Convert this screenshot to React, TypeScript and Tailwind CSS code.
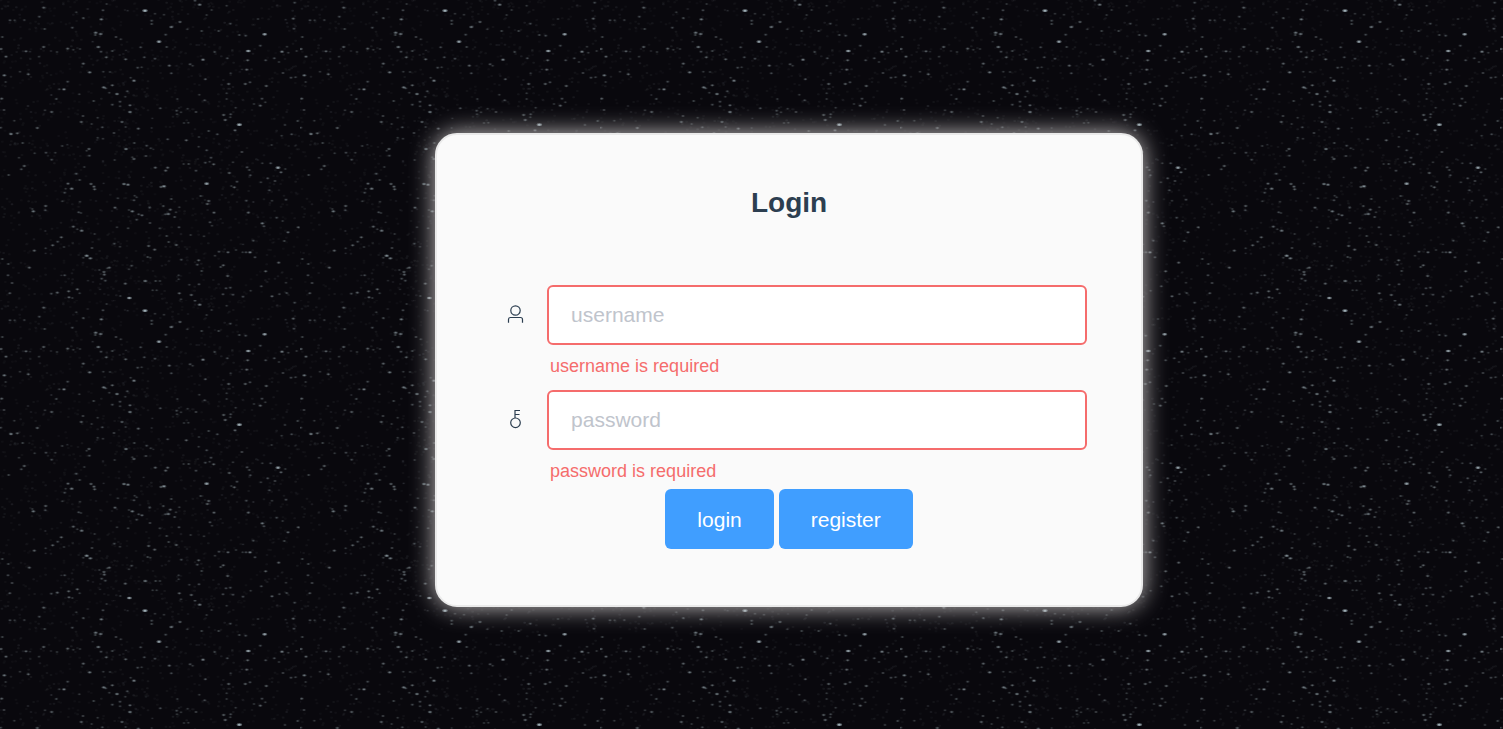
import { useState } from "react";

// Stars of one 300px sky tile, in thirds of a pixel: x, y, brightness (1-9)
const STARS: number[][] = [
  [131,23,5],[435,32,9],[585,2,4],[599,14,6],[680,17,3],[884,8,4],[320,12,3],[118,50,4],[229,37,3],[250,54,4],[309,31,4],[304,58,6],[30,61,4],[44,61,3],[73,60,3],[134,87,4],[217,83,4],[383,32,2],[465,41,3],[492,44,3],[455,62,4],[455,72,4],[540,66,5],[514,81,6],[562,88,3],[620,45,3],[635,30,3],[691,71,4],[656,93,4],[605,93,4],[774,57,3],[880,56,5],[857,59,2],[882,86,4],
  [287,98,6],[302,102,6],[286,105,4],[278,125,2],[348,111,4],[362,118,3],[295,141,6],[303,155,4],[337,153,4],[319,172,5],[7,111,4],[3,147,5],[18,170,5],[78,154,5],[90,155,2],[131,141,5],[117,170,3],[203,146,5],[220,149,3],[240,147,3],[171,156,3],[153,153,2],[250,191,5],[497,104,4],[477,125,8],[422,142,4],[500,141,4],[433,172,4],[465,176,4],[377,178,5],[378,151,2],[508,197,5],[514,220,4],[413,203,4],[425,202,3],[644,156,4],[609,179,6],[570,193,4],[578,197,3],[682,175,4],[718,105,4],[737,107,4],[794,103,8],[781,137,4],[745,153,8],[743,181,5],[797,181,4],[823,175,4],[846,155,6],[865,158,3],[890,153,3],[861,140,3],[740,209,5],[726,208,2],[837,186,3],
  [13,226,6],[17,246,3],[60,215,3],[85,223,5],[203,245,4],[269,217,6],[310,215,3],[330,216,3],[192,268,6],[178,268,3],[5,296,5],[402,242,6],[392,233,3],[337,256,5],[311,262,6],[317,265,4],[382,274,4],[328,278,3],[351,282,6],[376,290,3],[360,305,4],[337,314,4],[360,319,3],[390,316,5],[390,336,6],[281,303,4],[169,297,4],[154,285,2],[238,283,3],[155,336,5],[135,331,3],[12,330,4],[84,318,2],[616,238,4],[692,220,3],[849,219,4],[686,252,5],[736,252,5],[750,247,4],[799,258,5],[873,233,4],[886,232,3],[680,280,3],[598,284,3],[614,301,4],[680,297,3],[786,296,4],[796,307,3],[762,312,3],[781,317,5],[532,297,3],[481,325,4],[530,332,4],[543,337,3],[563,326,3],[588,336,4],[707,323,3],
  [43,362,3],[112,384,5],[52,400,5],[33,402,6],[2,383,4],[249,348,4],[244,366,5],[275,372,3],[293,353,3],[307,382,4],[366,366,5],[377,381,3],[415,386,5],[342,399,4],[293,413,3],[309,416,3],[457,355,2],[455,384,2],[531,343,3],[552,369,3],[565,368,3],[671,345,5],[692,343,4],[691,352,3],[676,360,5],[718,374,9],[705,391,5],[626,393,4],[652,403,4],[893,363,4],[875,403,4],[855,375,3],[845,407,3],[503,418,4],[559,421,5],[597,411,3],[596,440,3],[815,435,3],[68,429,4],[45,429,1],[88,429,1],[187,438,3],[202,434,2],[267,447,5],[260,452,3],[403,429,4],[378,447,6],[440,437,4],[452,445,3],[460,448,2],[620,451,4],[726,456,4],
  [104,460,3],[138,458,4],[166,458,3],[155,479,4],[57,473,3],[73,498,5],[64,508,4],[26,525,4],[268,467,4],[253,501,3],[229,521,4],[239,540,4],[402,477,5],[397,472,3],[344,480,3],[438,468,4],[466,503,5],[503,503,5],[497,512,5],[551,492,3],[566,492,4],[633,473,4],[616,488,4],[629,485,3],[641,493,5],[588,512,4],[688,519,5],[699,487,3],[741,502,4],[748,510,4],[751,526,4],[834,503,8],[843,517,5],[856,507,3],[812,490,4],[787,490,3],[803,535,4],[825,543,4],[783,547,3],[808,571,4],[816,602,3],[858,599,4],[711,545,4],[703,562,5],[694,558,3],[739,602,4],[760,606,2],
  [204,551,5],[215,566,6],[197,566,3],[194,578,4],[273,552,5],[282,560,5],[284,568,5],[372,552,6],[384,554,6],[311,550,2],[492,559,7],[483,561,5],[431,532,2],[620,551,8],[602,588,4],[626,603,5],[622,612,5],[642,638,5],[137,618,5],[136,631,4],[97,627,3],[100,634,6],[187,604,3],[240,605,3],[236,637,4],[243,639,3],[345,623,5],[354,595,3],[404,587,3],[402,601,4],[410,592,3],[397,634,6],[387,630,3],[449,623,4],[426,646,5],[416,643,4],[410,659,4],[490,618,4],[514,597,4],[511,629,5],[505,642,6],[496,643,4],[538,622,3],[528,637,3],[524,651,4],[745,638,5],[630,667,4],[636,677,3],[787,670,6],[792,679,4],[830,653,4],[848,663,3],[895,682,5],[864,697,5],[853,723,4],
  [136,693,2],[220,680,5],[232,688,3],[245,692,6],[257,667,2],[284,702,3],[351,682,3],[384,685,3],[184,712,5],[173,725,4],[158,736,5],[137,745,3],[103,752,5],[137,760,2],[192,741,3],[276,744,4],[260,767,7],[271,775,6],[250,773,3],[343,731,4],[360,740,3],[446,738,5],[464,749,5],[443,771,4],[451,773,3],[450,669,4],[479,685,3],[537,682,4],[500,708,4],[506,726,4],[529,735,5],[544,779,4],[572,705,3],[612,709,3],[596,781,5],[592,794,4],[657,755,4],[684,757,5],[708,750,3],[645,767,3],[670,796,5],[662,801,4],[750,757,6],[738,757,4],[728,757,3],[765,772,4],[760,722,4],[729,733,2],[836,788,5],[908,777,3],
  [7,777,4],[25,792,4],[88,803,5],[36,849,4],[24,826,4],[29,880,4],[194,826,4],[184,826,2],[298,810,3],[312,816,5],[313,824,5],[305,836,4],[316,842,4],[328,803,5],[322,805,3],[376,851,5],[395,797,4],[387,808,3],[436,843,6],[467,843,4],[480,843,3],[536,826,3],[536,838,3],[683,828,5],[605,813,4],[568,854,3],[797,814,5],[858,848,3],[784,859,4],[154,881,4],[172,878,5],[206,874,5],[232,868,5],[207,892,5],[217,894,3],[239,880,3],[264,842,2],[388,894,8],[361,888,3],[300,868,2],[538,880,5],[574,885,5],[597,853,4],[678,865,4],[691,863,4],[669,883,4],[699,884,4],[729,890,4],[816,889,5],[838,883,3],[752,872,3],[860,879,4],[543,898,3],[458,871,3],[470,871,3],
];

// Repeatable faint dust between the stars
const DUST = (() => {
  let seed = 71;
  const next = () => {
    seed = (seed * 16807) % 2147483647;
    return seed / 2147483647;
  };
  return Array.from({ length: 1300 }, () => [
    Math.round(next() * 898),
    Math.round(next() * 898),
    0.03 + next() * next() * 0.09,
  ]);
})();

function Sky() {
  return (
    <svg className="absolute inset-0 -z-10 h-full w-full" aria-hidden="true">
      <defs>
        <pattern id="sky" width="300" height="300" patternUnits="userSpaceOnUse">
          <g transform="scale(0.33333)">
            {DUST.map(([x, y, o], i) => (
              <ellipse key={i} cx={x} cy={y} rx="4" ry="3" fill="#a7b4bb" opacity={o} />
            ))}
            {STARS.map(([x, y, b], i) => (
              <g key={i} fill="#a3b3ba">
                <ellipse cx={x} cy={y} rx={4 + b * 0.5} ry={2.4 + b * 0.2} opacity={b * b * 0.006 + 0.05} />
                <ellipse cx={x} cy={y} rx={2 + b * 0.25} ry={1.7 + b * 0.15} opacity={b * b * 0.01 + 0.1} />
              </g>
            ))}
          </g>
        </pattern>
      </defs>
      <rect width="100%" height="100%" fill="url(#sky)" />
    </svg>
  );
}

function UserIcon() {
  return (
    <svg width="21" height="21" viewBox="0 0 21 21" fill="none" stroke="#2c3e50" strokeWidth="1.2" aria-hidden="true">
      <circle cx="10.5" cy="6.5" r="4.7" />
      <path d="M3.5 18.8V15.5Q3.5 13.5 5.5 13.5H15.5Q17.5 13.5 17.5 15.5V18.8" />
    </svg>
  );
}

function KeyIcon() {
  return (
    <svg width="21" height="21" viewBox="0 0 21 21" fill="none" stroke="#2c3e50" strokeWidth="1.2" aria-hidden="true">
      <circle cx="10.5" cy="13.8" r="4.8" />
      <path d="M10 9V1.5H15M10 5.5H14.5" />
    </svg>
  );
}

type FieldProps = {
  name: string;
  type: string;
  icon: React.ReactNode;
  value: string;
  onChange: (value: string) => void;
};

function Field({ name, type, icon, value, onChange }: FieldProps) {
  const missing = value === "";
  return (
    <div className="flex h-[105px]">
      <label htmlFor={name} aria-label={name} className="flex h-[60px] w-14 shrink-0 items-center pb-px pl-[14px]">
        {icon}
      </label>
      <div className="min-w-0 flex-1">
        <input
          id={name}
          name={name}
          type={type}
          placeholder={name}
          value={value}
          onChange={(e) => onChange(e.target.value)}
          aria-invalid={missing}
          className="block h-[60px] w-full rounded-md border-2 border-[#dcdfe6] bg-white px-[22px] text-[21px] text-[#606266] outline-none placeholder:text-[#c0c4cc] aria-invalid:border-[#f56c6c]"
        />
        {missing && <p className="pt-2 pl-[3px] text-[18px] leading-[26px] text-[#f56c6c]">{name} is required</p>}
      </div>
    </div>
  );
}

const BUTTON =
  "h-[60px] cursor-pointer rounded-md bg-[#409eff] px-8 pt-[2px] text-[21px] text-white hover:bg-[#66b1ff]";

export default function App() {
  const [username, setUsername] = useState("");
  const [password, setPassword] = useState("");
  return (
    <main className="relative isolate flex min-h-screen items-start justify-center bg-[#09080d] pt-[133px] pl-[5%] font-['Liberation_Sans',Arial,sans-serif]">
      <Sky />
      <form
        onSubmit={(e) => e.preventDefault()}
        className="w-full max-w-[708px] rounded-[22px] border-2 border-[#eaeaea] bg-[#fafafa] px-[54px] pt-[50px] pb-14 shadow-[0_0_25px_#cac6c6]"
      >
        <h1 className="mb-16 text-center text-[28px] leading-9 font-bold text-[#2c3e50]">Login</h1>
        <Field name="username" type="text" icon={<UserIcon />} value={username} onChange={setUsername} />
        <Field name="password" type="password" icon={<KeyIcon />} value={password} onChange={setPassword} />
        <div className="-mt-[6px] flex justify-center gap-[5px]">
          <button type="submit" className={BUTTON}>login</button>
          <button type="button" className={BUTTON}>register</button>
        </div>
      </form>
    </main>
  );
}
